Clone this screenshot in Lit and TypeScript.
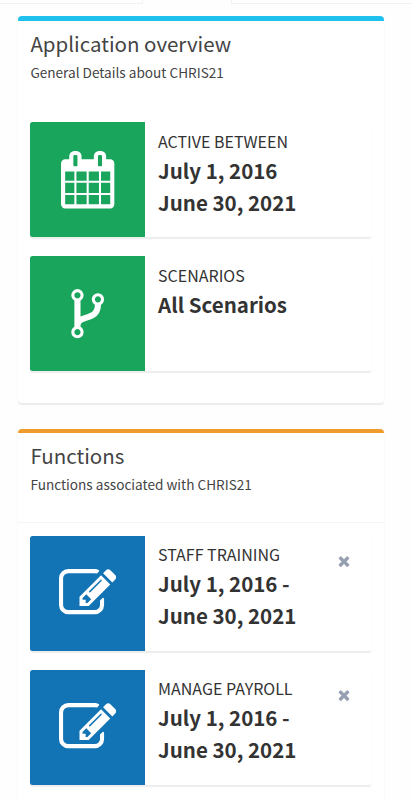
import { LitElement, html, css, svg } from "lit";
import { customElement, property } from "lit/decorators.js";

const ICONS: Record<string, string> = {
  calendar:
    "M192 1664h288v-288h-288v288zm352 0h320v-288h-320v288zm-352-352h288v-320h-288v320zm352 0h320v-320h-320v320zm-352-384h288v-288h-288v288zm736 736h320v-288h-320v288zm-384-736h320v-288h-320v288zm768 736h288v-288h-288v288zm-384-352h320v-320h-320v320zm-352-864v-288q0-13-9.5-22.5t-22.5-9.5h-64q-13 0-22.5 9.5t-9.5 22.5v288q0 13 9.5 22.5t22.5 9.5h64q13 0 22.5-9.5t9.5-22.5zm736 864h288v-320h-288v320zm-384-384h320v-288h-320v288zm384 0h288v-288h-288v288zm32-480v-288q0-13-9.5-22.5t-22.5-9.5h-64q-13 0-22.5 9.5t-9.5 22.5v288q0 13 9.5 22.5t22.5 9.5h64q13 0 22.5-9.5t9.5-22.5zm384-64v1280q0 52-38 90t-90 38h-1408q-52 0-90-38t-38-90v-1280q0-52 38-90t90-38h128v-96q0-66 47-113t113-47h64q66 0 113 47t47 113v96h384v-96q0-66 47-113t113-47h64q66 0 113 47t47 113v96h128q52 0 90 38t38 90z",
  fork:
    "M672 1472q0-40-28-68t-68-28-68 28-28 68 28 68 68 28 68-28 28-68zm0-1152q0-40-28-68t-68-28-68 28-28 68 28 68 68 28 68-28 28-68zm640 128q0-40-28-68t-68-28-68 28-28 68 28 68 68 28 68-28 28-68zm96 0q0 52-26 96.5t-70 69.5q-2 287-226 414-67 38-203 81-128 40-169.5 71t-41.5 100v26q44 25 70 69.5t26 96.5q0 80-56 136t-136 56-136-56-56-136q0-52 26-96.5t70-69.5v-820q-44-25-70-69.5t-26-96.5q0-80 56-136t136-56 136 56 56 136q0 52-26 96.5t-70 69.5v497q54-26 154-57 55-17 87.5-29.5t70.5-31 59-39.5 40.5-51 28-69.5 8.5-91.5q-44-25-70-69.5t-26-96.5q0-80 56-136t136-56 136 56 56 136z",
  edit:
    "M888 1184l116-116-152-152-116 116v56h96v96h56zm440-720q-16-16-33 1l-350 350q-17 17-1 33t33-1l350-350q17-17 1-33zm80 594v190q0 119-84.5 203.5t-203.5 84.5h-832q-119 0-203.5-84.5t-84.5-203.5v-832q0-119 84.5-203.5t203.5-84.5h832q63 0 117 25 15 7 18 23 3 17-9 29l-49 49q-14 14-32 8-23-6-45-6h-832q-66 0-113 47t-47 113v832q0 66 47 113t113 47h832q66 0 113-47t47-113v-126q0-13 9-22l64-64q15-15 35-7t20 29zm-96-738l288 288-672 672h-288v-288zm444 132l-92 92-288-288 92-92q28-28 68-28t68 28l152 152q28 28 28 68t-28 68z",
  times:
    "M1490 1322q0 40-28 68l-136 136q-28 28-68 28t-68-28l-294-294-294 294q-28 28-68 28t-68-28l-136-136q-28-28-28-68t28-68l294-294-294-294q-28-28-28-68t28-68l136-136q28-28 68-28t68 28l294 294 294-294q28-28 68-28t68 28l136 136q28 28 28 68t-28 68l-294 294 294 294q28 28 28 68z",
};

const icon = (name: string) => html`<svg viewBox="0 0 1792 1792" aria-hidden="true">
  ${svg`<path fill="currentColor" d=${ICONS[name]}></path>`}
</svg>`;

@customElement("info-box")
class InfoBox extends LitElement {
  @property() icon = "calendar";
  @property() tone = "green";
  @property() label = "";
  @property({ attribute: false }) lines: string[] = [];
  @property({ type: Boolean }) removable = false;

  static styles = css`
    :host {
      display: block;
    }
    .box {
      display: flex;
      height: 115px;
      border-radius: 2.5px;
      background: #fff;
      box-shadow: 0 1.3px 1.3px rgba(0, 0, 0, 0.08);
    }
    .tile {
      flex: none;
      width: 115px;
      display: flex;
      align-items: center;
      justify-content: center;
      color: #fff;
      border-radius: 2.5px 0 0 2.5px;
    }
    .green {
      background: #1aa55d;
    }
    .blue {
      background: #1274b4;
    }
    .tile svg {
      display: block;
      width: 57.4px;
      height: 57.4px;
    }
    .text {
      flex: 1;
      padding: 6px 0 0 12.7px;
      white-space: nowrap;
    }
    .label {
      font-size: 16px;
      line-height: 26px;
    }
    .value {
      font-size: 20.5px;
      line-height: 32px;
      font-weight: 700;
    }
    .close {
      flex: none;
      border: 0;
      padding: 0;
      background: none;
      color: #97a0b3;
      width: 16px;
      height: 16px;
      margin: 17px 19.3px 0 0;
    }
    .close svg {
      display: block;
      width: 16px;
      height: 16px;
    }
    .blue + .text {
      padding-top: 5px;
    }
  `;

  render() {
    return html`<div class="box">
      <div class="tile ${this.tone} ${this.icon}">${icon(this.icon)}</div>
      <div class="text">
        <div class="label">${this.label}</div>
        ${this.lines.map((l) => html`<div class="value">${l}</div>`)}
      </div>
      ${this.removable
        ? html`<button class="close" aria-label="Remove">${icon("times")}</button>`
        : null}
    </div>`;
  }
}

@customElement("app-root")
class AppRoot extends LitElement {
  static styles = css`
    :host {
      display: block;
      height: 800px;
      overflow: hidden;
      background: #fefefe;
      color: #333;
      font-family: "Noto Sans CJK JP", "Noto Sans", sans-serif;
    }
    .tabs {
      display: flex;
      height: 4px;
    }
    .tab {
      box-sizing: border-box;
      border-bottom: 1px solid #f2f2f2;
    }
    .before {
      width: 143px;
      border-right: 1px solid #f2f2f2;
    }
    .active {
      width: 88px;
      border-bottom: 0;
    }
    .after {
      flex: 1;
      border-left: 1px solid #f2f2f2;
    }
    .cards {
      display: flex;
      flex-direction: column;
      gap: 26px;
      padding: 12px 28px 0 17.7px;
    }
    .card {
      box-sizing: border-box;
      border-top: 4px solid;
      border-radius: 4px;
      background: #fff;
      box-shadow: 0 1.3px 1.3px rgba(0, 0, 0, 0.08);
    }
    .overview {
      height: 387px;
      border-top-width: 5px;
      border-top-color: #1fc0ee;
    }
    .functions {
      height: 420px;
      border-top-color: #f09c2c;
    }
    .head {
      box-sizing: border-box;
      height: 89px;
      padding: 6px 12.7px 0;
      color: #444;
    }
    .functions .head {
      height: 90px;
      border-bottom: 1px solid #f4f4f4;
    }
    .title {
      font-size: 20.5px;
      line-height: 32px;
    }
    .sub {
      margin-top: 1px;
      font-size: 13.6px;
      line-height: 24px;
    }
    .body {
      display: flex;
      flex-direction: column;
      gap: 19px;
      padding: 12.4px 12.7px 0;
    }
    .functions .body {
      padding-top: 12.8px;
    }
  `;

  render() {
    const period = ["July 1, 2016 -", "June 30, 2021"];
    return html`
      <div class="tabs">
        <div class="tab before"></div>
        <div class="tab active"></div>
        <div class="tab after"></div>
      </div>
      <div class="cards">
        <section class="card overview">
          <div class="head">
            <div class="title">Application overview</div>
            <div class="sub">General Details about CHRIS21</div>
          </div>
          <div class="body">
            <info-box icon="calendar" label="ACTIVE BETWEEN" .lines=${["July 1, 2016", "June 30, 2021"]}></info-box>
            <info-box icon="fork" label="SCENARIOS" .lines=${["All Scenarios"]}></info-box>
          </div>
        </section>
        <section class="card functions">
          <div class="head">
            <div class="title">Functions</div>
            <div class="sub">Functions associated with CHRIS21</div>
          </div>
          <div class="body">
            <info-box icon="edit" tone="blue" label="STAFF TRAINING" .lines=${period} removable></info-box>
            <info-box icon="edit" tone="blue" label="MANAGE PAYROLL" .lines=${period} removable></info-box>
          </div>
        </section>
      </div>
    `;
  }
}
